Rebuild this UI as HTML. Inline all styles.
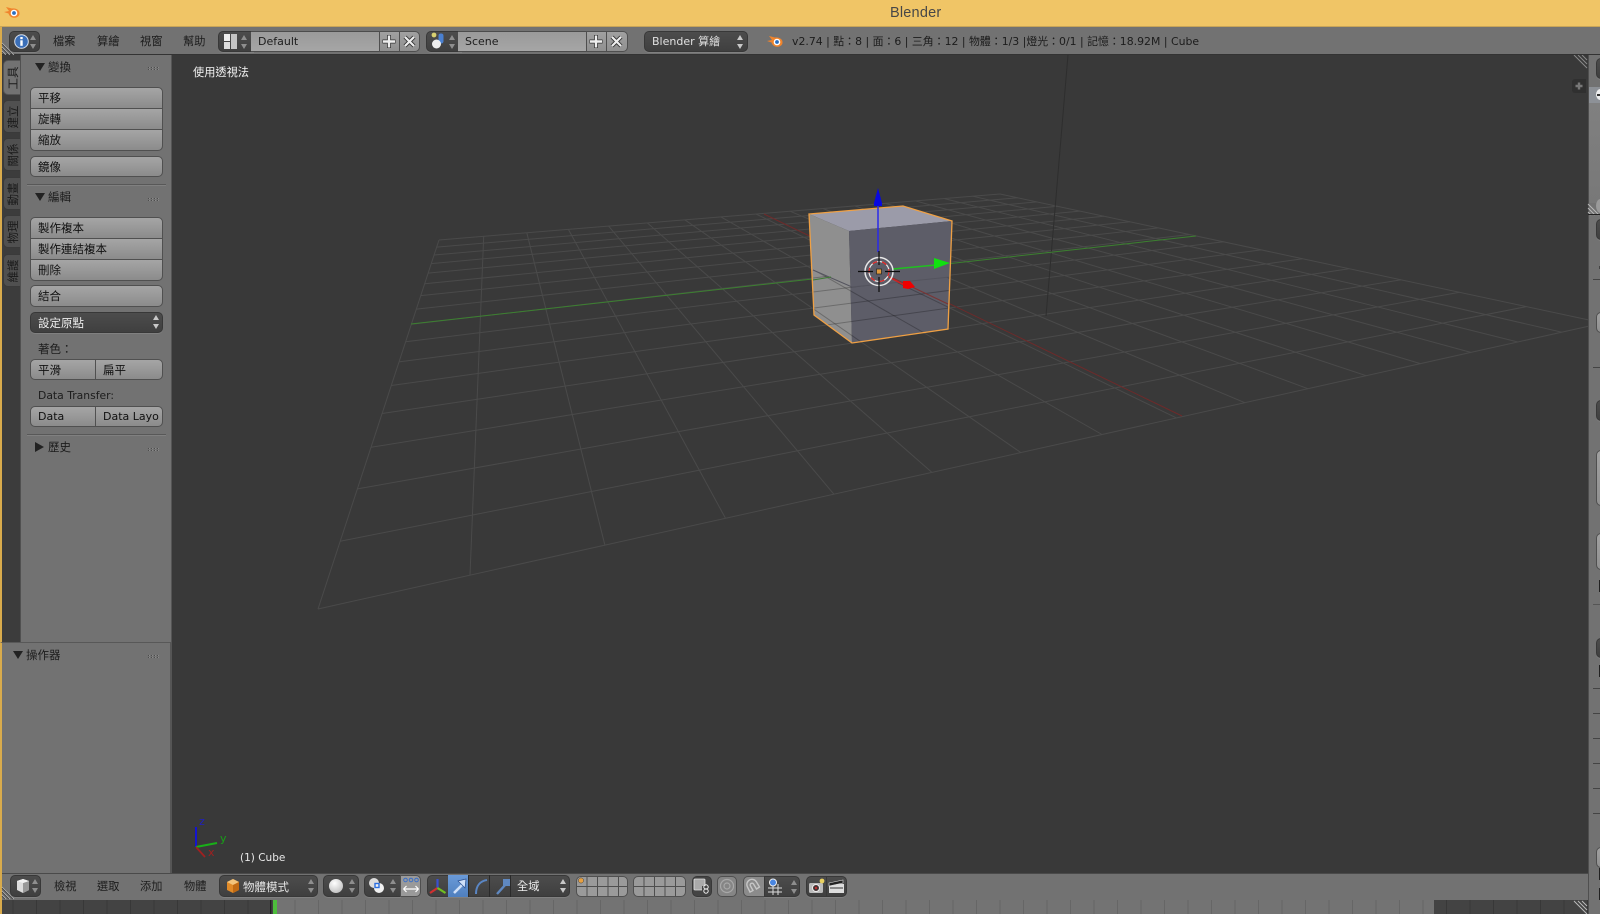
<!DOCTYPE html>
<html><head><meta charset="utf-8"><title>Blender</title>
<style>
html,body{margin:0;padding:0;width:1600px;height:914px;overflow:hidden;background:#393939}
body{position:relative;font:11px "DejaVu Sans","Noto Sans CJK TC",sans-serif;color:#1c1c1c;filter:blur(.3px)}
.a{position:absolute;white-space:nowrap}
.t{position:absolute;white-space:nowrap;line-height:16px;height:16px}
.hd{background:#727272}
.dk{position:absolute;box-sizing:border-box;background:linear-gradient(#4c4c4c,#3f3f3f);border:1px solid #383838;border-radius:5px;box-shadow:0 1px 0 #808080}
.fld{position:absolute;box-sizing:border-box;background:linear-gradient(#9a9a9a,#a6a6a6);border:1px solid #4c4c4c;border-left:0;border-right:0}
.btn{position:absolute;box-sizing:border-box;background:linear-gradient(#a5a5a5,#8b8b8b);border:1px solid #505050;line-height:20px;padding-left:7px;color:#111;font-size:11.5px}
.lt{position:absolute;box-sizing:border-box;background:linear-gradient(#a0a0a0,#909090);border:1px solid #4f4f4f;border-radius:5px}
.ud{position:absolute;width:7px;height:14px}
.ud:before,.ud:after{content:"";position:absolute;left:0;border-left:3.5px solid transparent;border-right:3.5px solid transparent}
.ud:before{top:0;border-bottom:5.5px solid #8e8e8e}
.ud:after{bottom:0;border-top:5.5px solid #8e8e8e}
.ud.w:before{border-bottom-color:#c8c8c8}.ud.w:after{border-top-color:#c8c8c8}
.tab{position:absolute;left:3px;width:18px;box-sizing:border-box;background:#505050;border-radius:5px 0 0 5px;border:1px solid #3a3a3a;border-right:0}
.tab span{position:absolute;left:50%;top:50%;transform:translate(-50%,-50%) rotate(-90deg);white-space:nowrap;font-size:11.5px;color:#1a1a1a;line-height:14px}
.grip{position:absolute;left:148px;width:11px;height:5px;background:repeating-linear-gradient(0deg,#727272 0 1px,transparent 1px 2px),repeating-linear-gradient(90deg,#4d4d4d 0 1px,#8a8a8a 1px 2px,transparent 2px 3px)}
.tri{position:absolute;width:0;height:0;border-left:5px solid transparent;border-right:5px solid transparent;border-top:8px solid #222}
.trr{position:absolute;width:0;height:0;border-top:5px solid transparent;border-bottom:5px solid transparent;border-left:9px solid #222}
.sep{position:absolute;left:27px;width:139px;height:1px;background:#585858;box-shadow:0 1px 0 #808080}
svg{position:absolute;overflow:visible}
</style></head><body>

<!-- viewport -->
<svg id="vp" style="left:0;top:0" width="1600" height="914" viewBox="0 0 1600 914">
<g id="g1" stroke="#4a4a4a" stroke-width="1" fill="none"></g>
<line x1="1068" y1="55" x2="1046" y2="316" stroke="#2e2e2e"/>
<line x1="764" y1="214" x2="1182" y2="416" stroke="#6e2a2a"/>
<line x1="411" y1="324" x2="1196" y2="236" stroke="#3c8030"/>
<polygon points="809,214 903,206 952,221 849,231" fill="#9b9ba9"/>
<polygon points="809,214 849,231 852,343 814,315" fill="#8f8f8f"/>
<polygon points="849,231 952,221 948,329 852,343" fill="#5d5d68"/>
<clipPath id="cl"><polygon points="813,270 852,287 950,277 948,329 852,343 814,315"/></clipPath>
<g id="g2" stroke="rgba(0,0,0,.25)" fill="none" clip-path="url(#cl)"></g>
<polyline points="813,270 852,287 950,277" stroke="#54545e" fill="none"/>
<line x1="813" y1="280" x2="831" y2="277" stroke="#3c7a32"/>
<line x1="893" y1="278" x2="948" y2="304" stroke="#7a3434"/>
<polygon points="809,214 903,206 952,221 948,329 852,343 814,315" fill="none" stroke="#efa044" stroke-width="1.300"/>
<!-- manipulator -->
<line x1="878" y1="200" x2="878" y2="252" stroke="#2a2ae8" stroke-width="1.500"/>
<polygon points="878,188 882,203 882,206 874,206 874,203" fill="#0808e0"/>
<line x1="893" y1="269" x2="936" y2="265" stroke="#20c020" stroke-width="1.500"/>
<polygon points="950,263 934,258 934,269" fill="#10e010"/>
<line x1="889" y1="277" x2="904" y2="285" stroke="#d02020" stroke-width="1.500"/>
<polygon points="903,281 910,281 915,287 908,289 903,288" fill="#f00000"/>
<!-- cursor -->
<circle cx="879" cy="271.500" r="14" fill="none" stroke="#e8e8e8" stroke-width="1.500"/>
<circle cx="879" cy="271.500" r="10" fill="none" stroke="#e8e8e8" stroke-width="1.200"/>
<circle cx="879" cy="271.500" r="10" fill="none" stroke="#e02020" stroke-width="1.200" stroke-dasharray="5 5"/>
<path d="M858 271.500h15M885 271.500h15M879 251v14M879 277v15" stroke="#0c0c0c" stroke-width="1.200"/>
<rect x="876.500" y="269" width="5" height="5" fill="#e09a3c" stroke="#222" stroke-width=".7"/>
<!-- axis widget -->
<path d="M196 847V827" stroke="#1414d0" stroke-width="2"/>
<path d="M196 847L217 843" stroke="#18b018" stroke-width="2"/>
<path d="M196 847L205 857" stroke="#a02020" stroke-width="1.800"/>
<text x="199" y="825" font-size="11" fill="#2020c0" font-family="DejaVu Sans">z</text>
<text x="220" y="842" font-size="11" fill="#18a018" font-family="DejaVu Sans">y</text>
<text x="208" y="856" font-size="11" fill="#a02020" font-family="DejaVu Sans">x</text>
<!-- corners -->
<path d="M1574 55l13 13M1578 55l9 9M1582 55l5 5" stroke="#8a8a8a" stroke-width="1"/>
</svg>
<div class="t" style="left:193px;top:65px;color:#f4f4f4;font-size:11.200px">使用透視法</div>
<div class="t" style="left:240px;top:850px;color:#e8e8e8;font-size:10.500px">(1) Cube</div>
<div class="a" style="left:1572px;top:79px;width:14px;height:14px;background:#303030;border-radius:3px 0 0 3px"></div>
<svg style="left:1572px;top:79px" width="14" height="14"><path d="M7 3.500v7M3.500 7h7" stroke="#777" stroke-width="2.400"/></svg>

<!-- title -->
<div class="a" style="left:0;top:0;width:1600px;height:27px;background:#f0c566;border-bottom:1px solid #c9a558;box-sizing:border-box"></div>
<div class="t" style="left:890px;top:4px;font:14.500px/18px 'Liberation Sans',sans-serif;color:#474747;height:18px;letter-spacing:.2px">Blender</div>
<svg style="left:3px;top:4px" width="18" height="16" viewBox="0 0 18 16"><path d="M1 8l5-1L3 3l6 1.500C13 4 17 6 16.500 10c-.5 3-4 4.500-7 3.500C7 12.800 6 11 5.500 9.500z" fill="#f0842c"/><circle cx="11" cy="9" r="3.300" fill="#fff"/><circle cx="11" cy="9" r="1.900" fill="#2c6fc0"/></svg>

<!-- left orange strip -->
<div class="a" style="left:0;top:27px;width:2px;height:887px;background:#d9ab4c"></div>

<!-- top header -->
<div class="a hd" style="left:2px;top:27px;width:1598px;height:27px;border-bottom:1px solid #333;box-sizing:content-box"></div>
<svg style="left:2px;top:43px" width="14" height="12"><path d="M0 1l11 11M0 5l7 7M0 9l3 3" stroke="#3c3c3c"/><path d="M0 0l12 12M0 4l8 8M0 8l4 4" stroke="#bdbdbd" stroke-width=".7"/></svg>
<div class="dk" style="left:9px;top:31px;width:31px;height:21px"></div>
<svg style="left:14px;top:34px" width="15" height="15"><circle cx="7.500" cy="7.500" r="6.800" fill="#3b6fb8" stroke="#d8e0ec" stroke-width="1"/><rect x="6.300" y="6.300" width="2.400" height="5.500" fill="#fff"/><rect x="6.300" y="3" width="2.400" height="2.200" fill="#fff"/></svg>
<div class="ud" style="left:30px;top:35px"></div>
<div class="t" style="left:53px;top:34px;font-size:11.200px">檔案</div>
<div class="t" style="left:97px;top:34px;font-size:11.200px">算繪</div>
<div class="t" style="left:140px;top:34px;font-size:11.200px">視窗</div>
<div class="t" style="left:183px;top:34px;font-size:11.200px">幫助</div>

<div class="dk" style="left:218px;top:31px;width:36px;height:21px;border-radius:5px 0 0 5px"></div>
<svg style="left:224px;top:34px" width="14" height="15"><rect x="0" y="0" width="6" height="7" fill="#eee"/><rect x="0" y="8" width="6" height="7" fill="#ddd"/><rect x="7" y="0" width="6" height="15" fill="#c4c4c4"/></svg>
<div class="ud" style="left:241px;top:35px"></div>
<div class="fld" style="left:251px;top:31px;width:128px;height:21px;padding-left:7px;line-height:20px">Default</div>
<div class="lt" style="left:379px;top:31px;width:21px;height:21px;border-radius:0"></div>
<div class="lt" style="left:399px;top:31px;width:21px;height:21px;border-radius:0 5px 5px 0"></div>
<svg style="left:379px;top:31px" width="41" height="21"><path d="M10 4v13M3.500 10.500h13" stroke="#333" stroke-width="4"/><path d="M10 4.500v12M4 10.500h12" stroke="#eee" stroke-width="2.400"/><path d="M26 6l9 9M35 6l-9 9" stroke="#333" stroke-width="4"/><path d="M26 6l9 9M35 6l-9 9" stroke="#eee" stroke-width="2.200"/></svg>

<div class="dk" style="left:426px;top:31px;width:36px;height:21px;border-radius:5px 0 0 5px"></div>
<svg style="left:431px;top:32px" width="16" height="18"><circle cx="3" cy="3" r="2.400" fill="#d8d070"/><rect x="7.500" y="1.500" width="5" height="10" rx="2.200" fill="#4a80d0"/><circle cx="5.500" cy="12" r="4.500" fill="#eee"/></svg>
<div class="ud" style="left:449px;top:35px"></div>
<div class="fld" style="left:458px;top:31px;width:128px;height:21px;padding-left:7px;line-height:20px">Scene</div>
<div class="lt" style="left:586px;top:31px;width:21px;height:21px;border-radius:0"></div>
<div class="lt" style="left:606px;top:31px;width:22px;height:21px;border-radius:0 5px 5px 0"></div>
<svg style="left:586px;top:31px" width="41" height="21"><path d="M10 4v13M3.500 10.500h13" stroke="#333" stroke-width="4"/><path d="M10 4.500v12M4 10.500h12" stroke="#eee" stroke-width="2.400"/><path d="M26 6l9 9M35 6l-9 9" stroke="#333" stroke-width="4"/><path d="M26 6l9 9M35 6l-9 9" stroke="#eee" stroke-width="2.200"/></svg>

<div class="dk" style="left:644px;top:31px;width:104px;height:21px"></div>
<div class="t" style="left:652px;top:34px;color:#e0e0e0;font-size:11px">Blender 算繪</div>
<div class="ud w" style="left:737px;top:35px"></div>

<svg style="left:766px;top:33px" width="18" height="16" viewBox="0 0 18 16"><path d="M1 8l5-1L3 3l6 1.500C13 4 17 6 16.500 10c-.5 3-4 4.500-7 3.500C7 12.800 6 11 5.500 9.500z" fill="#f0842c"/><circle cx="11" cy="9" r="3.300" fill="#fff"/><circle cx="11" cy="9" r="1.900" fill="#2c6fc0"/></svg>
<div class="t" style="left:792px;top:34px;font-size:10.900px;color:#1c1c1c">v2.74 | 點：8 | 面：6 | 三角：12 | 物體：1/3 |燈光：0/1 | 記憶：18.92M | Cube</div>

<!-- left tabs -->
<div class="a" style="left:2px;top:55px;width:19px;height:818px;background:#3c3c3c"></div>
<div class="tab" style="top:60px;height:35px;background:#727272;border-color:#555"><span>工具</span></div>
<div class="tab" style="top:100px;height:33px"><span>建立</span></div>
<div class="tab" style="top:138px;height:33px"><span>關係</span></div>
<div class="tab" style="top:177px;height:33px"><span>動畫</span></div>
<div class="tab" style="top:215px;height:33px"><span>物理</span></div>
<div class="tab" style="top:254px;height:33px"><span>維護</span></div>

<!-- tool shelf -->
<div class="a" style="left:21px;top:55px;width:150px;height:818px;background:#727272;border-right:1px solid #555;border-left:1px solid #505050;box-sizing:content-box;margin-left:-1px"></div>

<div class="tri" style="left:35px;top:63px"></div>
<div class="t" style="left:48px;top:59px;font-size:11.500px">變換</div>
<div class="grip" style="top:66px"></div>
<div class="btn" style="left:30px;top:87px;width:133px;height:22px;border-radius:5px 5px 0 0">平移</div>
<div class="btn" style="left:30px;top:108px;width:133px;height:22px">旋轉</div>
<div class="btn" style="left:30px;top:129px;width:133px;height:22px;border-radius:0 0 5px 5px">縮放</div>
<div class="btn" style="left:30px;top:156px;width:133px;height:21px;border-radius:5px">鏡像</div>
<div class="sep" style="top:184px"></div>

<div class="tri" style="left:35px;top:193px"></div>
<div class="t" style="left:48px;top:189px;font-size:11.500px">編輯</div>
<div class="grip" style="top:197px"></div>
<div class="btn" style="left:30px;top:217px;width:133px;height:22px;border-radius:5px 5px 0 0">製作複本</div>
<div class="btn" style="left:30px;top:238px;width:133px;height:22px">製作連結複本</div>
<div class="btn" style="left:30px;top:259px;width:133px;height:22px;border-radius:0 0 5px 5px">刪除</div>
<div class="btn" style="left:30px;top:285px;width:133px;height:22px;border-radius:5px">結合</div>
<div class="dk" style="left:30px;top:312px;width:133px;height:21px;color:#eee;padding-left:7px;line-height:20px;font-size:11.500px">設定原點</div>
<div class="ud w" style="left:153px;top:315px"></div>
<div class="t" style="left:38px;top:341px;font-size:11.500px">著色：</div>
<div class="btn" style="left:30px;top:359px;width:66px;height:21px;border-radius:5px 0 0 5px">平滑</div>
<div class="btn" style="left:95px;top:359px;width:68px;height:21px;border-radius:0 5px 5px 0">扁平</div>
<div class="t" style="left:38px;top:388px;font-size:10.800px">Data Transfer:</div>
<div class="btn" style="left:30px;top:406px;width:66px;height:21px;border-radius:5px 0 0 5px;font-size:11px">Data</div>
<div class="btn" style="left:95px;top:406px;width:68px;height:21px;border-radius:0 5px 5px 0;font-size:11px;overflow:hidden">Data Layo</div>
<div class="sep" style="top:434px"></div>
<div class="trr" style="left:35px;top:442px"></div>
<div class="t" style="left:48px;top:439px;font-size:11.500px">歷史</div>
<div class="grip" style="top:447px"></div>

<div class="a" style="left:0;top:642px;width:171px;height:231px;background:#727272;border-top:1px solid #585858;box-sizing:border-box;border-left:2px solid #d9ab4c;border-right:1px solid #555"></div>
<div class="tri" style="left:13px;top:651px"></div>
<div class="t" style="left:26px;top:647px;font-size:11.500px">操作器</div>
<div class="grip" style="top:654px"></div>

<!-- bottom header -->
<div class="a hd" style="left:2px;top:873px;width:1586px;height:26px;border-top:1px solid #4a4a4a;border-bottom:1px solid #333;box-sizing:content-box"></div>
<svg style="left:2px;top:887px" width="14" height="13"><path d="M0 1l11 11M0 5l7 7M0 9l3 3" stroke="#3c3c3c"/><path d="M0 0l12 12M0 4l8 8M0 8l4 4" stroke="#bdbdbd" stroke-width=".7"/></svg>
<div class="dk" style="left:10px;top:875px;width:31px;height:22px"></div>
<svg style="left:15px;top:878px" width="16" height="16"><path d="M2 3l6-2 6 2v9l-6 3-6-3z" fill="#ddd"/><path d="M8 5l6-2v9l-6 3z" fill="#999"/><path d="M2 3l6 2 6-2-6-2z" fill="#f2f2f2"/></svg>
<div class="ud" style="left:32px;top:879px"></div>
<div class="t" style="left:54px;top:879px;font-size:11.200px">檢視</div>
<div class="t" style="left:97px;top:879px;font-size:11.200px">選取</div>
<div class="t" style="left:140px;top:879px;font-size:11.200px">添加</div>
<div class="t" style="left:184px;top:879px;font-size:11.200px">物體</div>

<div class="dk" style="left:219px;top:875px;width:99px;height:22px"></div>
<svg style="left:225px;top:878px" width="16" height="16"><path d="M2 4l6-3 6 3v8l-6 3-6-3z" fill="#e08a28"/><path d="M2 4l6-3 6 3-6 3z" fill="#f2c47c"/><path d="M8 7l6-3v8l-6 3z" fill="#c06a14"/></svg>
<div class="t" style="left:243px;top:879px;color:#e6e6e6;font-size:11.500px">物體模式</div>
<div class="ud" style="left:308px;top:879px"></div>

<div class="dk" style="left:323px;top:875px;width:36px;height:22px"></div>
<svg style="left:329px;top:879px" width="15" height="15"><defs><radialGradient id="sp" cx=".4" cy=".3" r=".8"><stop offset="0" stop-color="#fff"/><stop offset="1" stop-color="#bbb"/></radialGradient></defs><circle cx="7" cy="7" r="7" fill="url(#sp)"/></svg>
<div class="ud" style="left:349px;top:879px"></div>

<div class="dk" style="left:364px;top:875px;width:37px;height:22px;border-radius:5px 0 0 5px"></div>
<svg style="left:368px;top:877px" width="18" height="18"><circle cx="6" cy="6" r="5" fill="#ddd"/><circle cx="11" cy="11" r="5" fill="#f0f0f0"/><rect x="7" y="6.500" width="4" height="4" fill="none" stroke="#2a6ee0" stroke-width="1.400"/></svg>
<div class="ud" style="left:390px;top:879px"></div>
<div class="lt" style="left:400px;top:875px;width:21px;height:22px;border-radius:0 5px 5px 0;background:#9a9a9a"></div>
<svg style="left:402px;top:877px" width="18" height="18"><circle cx="3.500" cy="3" r="1.800" fill="none" stroke="#3a6fc8"/><circle cx="9" cy="3" r="1.800" fill="none" stroke="#3a6fc8"/><circle cx="14.500" cy="3" r="1.800" fill="none" stroke="#3a6fc8"/><path d="M1.500 12h15M1.500 12l3-3M1.500 12l3 3M16.500 12l-3-3M16.500 12l-3 3" stroke="#fff" stroke-width="1.200" fill="none"/></svg>

<div class="dk" style="left:427px;top:875px;width:143px;height:22px"></div>
<div class="a" style="left:448px;top:875px;width:21px;height:22px;background:linear-gradient(#6a9ad8,#4f7fbe)"></div>
<div class="a" style="left:468px;top:875px;width:1px;height:22px;background:#2a2a2a"></div>
<div class="a" style="left:489px;top:875px;width:1px;height:22px;background:#2a2a2a"></div>
<div class="a" style="left:510px;top:875px;width:1px;height:22px;background:#2a2a2a"></div>
<svg style="left:427px;top:875px" width="90" height="22">
<path d="M10.500 13V4" stroke="#3a50d0" stroke-width="2.200"/><path d="M10.500 13L3 18" stroke="#d03030" stroke-width="2.200"/><path d="M10.500 13l8 5" stroke="#70c020" stroke-width="2.200"/>
<path d="M27 18L37 8" stroke="#cfe0f8" stroke-width="2.600"/><polygon points="39,4 31,6 38,13" fill="#cfe0f8" stroke="#2a4f90" stroke-width=".7"/>
<path d="M49 19c0-8 4-13 11-14" fill="none" stroke="#5a86c4" stroke-width="2"/>
<path d="M70 19L79 9" stroke="#5f88c0" stroke-width="2.400"/><rect x="76" y="4" width="7" height="7" fill="#5f88c0"/>
</svg>
<div class="t" style="left:517px;top:879px;color:#eee;font-size:11.200px">全域</div>
<div class="ud w" style="left:560px;top:879px"></div>

<div class="a" style="left:576px;top:876px;width:52px;height:21px;box-sizing:border-box;border:1px solid #505050;border-radius:5px;background:repeating-linear-gradient(90deg,#9a9a9a 0 9.500px,#4e4e4e 9.500px 10.500px);overflow:hidden"><div class="a" style="left:0;top:9px;width:52px;height:1px;background:#4e4e4e"></div></div>
<svg style="left:576px;top:876px" width="12" height="10"><circle cx="5" cy="4.500" r="2.600" fill="#e8a040" stroke="#444" stroke-width=".5"/></svg>
<div class="a" style="left:633px;top:876px;width:53px;height:21px;box-sizing:border-box;border:1px solid #505050;border-radius:5px;background:repeating-linear-gradient(90deg,#9a9a9a 0 9.500px,#4e4e4e 9.500px 10.500px);overflow:hidden"><div class="a" style="left:0;top:9px;width:53px;height:1px;background:#4e4e4e"></div></div>

<div class="dk" style="left:692px;top:876px;width:20px;height:21px;background:#444"></div>
<svg style="left:694px;top:878px" width="17" height="17"><rect x="0" y="1" width="11" height="11" rx="1" fill="#aaa" stroke="#e0e0e0" stroke-width=".8"/><path d="M8 8h6v7H8z" fill="#444"/><circle cx="12" cy="9" r="2.200" fill="none" stroke="#eee"/><circle cx="12" cy="13" r="2.200" fill="none" stroke="#eee"/></svg>
<div class="lt" style="left:717px;top:876px;width:20px;height:21px;background:#858585"></div>
<svg style="left:719px;top:878px" width="16" height="16"><circle cx="8" cy="8" r="6.500" fill="none" stroke="#a8a8a8" stroke-width="1.200"/><circle cx="8" cy="8" r="3" fill="none" stroke="#a8a8a8" stroke-width="1.200"/></svg>
<div class="lt" style="left:743px;top:876px;width:22px;height:21px;border-radius:5px 0 0 5px;background:#8b8b8b"></div>
<svg style="left:745px;top:878px" width="18" height="17"><path d="M5 14L2.500 9a5 5 0 0 1 9-5l3 5-3 2-3-5a1.500 1.500 0 0 0-3 2l2.500 4.500z" fill="none" stroke="#c6c6c6" stroke-width="1.400"/></svg>
<div class="dk" style="left:764px;top:876px;width:36px;height:21px;border-radius:0 5px 5px 0"></div>
<svg style="left:767px;top:878px" width="17" height="17"><path d="M1 10h14M1 14h14M6 6v11M11 6v11" stroke="#ddd" stroke-width="1"/><circle cx="6" cy="4.500" r="3.500" fill="#4a86e0" stroke="#eee"/></svg>
<div class="ud" style="left:791px;top:880px"></div>
<div class="dk" style="left:806px;top:876px;width:21px;height:21px;border-radius:5px 0 0 5px"></div>
<svg style="left:808px;top:878px" width="18" height="17"><rect x="1" y="5" width="14" height="10" rx="1.500" fill="#bbb"/><circle cx="8" cy="10" r="3.500" fill="#433" stroke="#eee"/><circle cx="8" cy="10" r="1.200" fill="#c03030"/><circle cx="14" cy="3" r="2.400" fill="#e8d060"/></svg>
<div class="dk" style="left:826px;top:876px;width:21px;height:21px;border-radius:0 5px 5px 0"></div>
<svg style="left:829px;top:879px" width="16" height="15"><rect x="0" y="5" width="15" height="9" fill="#ddd"/><path d="M1 9h13" stroke="#333"/><path d="M0 4l14-3v3L0 7z" fill="#222" stroke="#ddd" stroke-width=".6"/></svg>

<!-- timeline -->
<div class="a" style="left:2px;top:900px;width:1598px;height:14px;background:#434343"></div>
<div class="a" style="left:277px;top:900px;width:1157px;height:14px;background:#737373"></div>
<svg id="tl" style="left:0;top:900px" width="1600" height="14"></svg>
<div class="a" style="left:270px;top:900px;width:1px;height:14px;background:#202020"></div>
<div class="a" style="left:273px;top:900px;width:4px;height:14px;background:#4dbd3c"></div>
<svg style="left:1574px;top:900px" width="14" height="14"><path d="M0 1l13 13M4 1l9 9M8 1l5 5" stroke="#bbb" stroke-width="1"/></svg>

<!-- right strip -->
<div class="a" style="left:1588px;top:55px;width:12px;height:859px;background:#727272;border-left:1px solid #4f4f4f;box-sizing:border-box"></div>
<div class="dk" style="left:1596px;top:58px;width:10px;height:21px"></div>
<div class="a" style="left:1589px;top:87px;width:11px;height:16px;background:#8d9197"></div>
<div class="a" style="left:1596px;top:89px;width:9px;height:11px;border-radius:50%;background:#eee"></div>
<div class="a" style="left:1597px;top:94px;width:3px;height:1.500px;background:#333"></div>
<div class="a" style="left:1589px;top:103px;width:11px;height:100px;background:linear-gradient(#808080,#787878)"></div>
<div class="a" style="left:1596px;top:199px;width:9px;height:14px;border-radius:50%;background:#9a9a9a"></div>
<svg style="left:1588px;top:203px" width="12" height="12"><path d="M0 1l11 11M0 5l7 7M0 9l3 3" stroke="#b8b8b8"/></svg>
<div class="a" style="left:1588px;top:214px;width:12px;height:1px;background:#222"></div>
<div class="dk" style="left:1596px;top:219px;width:10px;height:21px"></div>
<div class="a" style="left:1599px;top:266px;width:2px;height:3px;background:#444"></div>
<div class="a" style="left:1593px;top:279px;width:7px;height:1px;background:#444"></div>
<div class="lt" style="left:1596px;top:312px;width:10px;height:21px"></div>
<div class="a" style="left:1593px;top:367px;width:7px;height:1px;background:#444"></div>
<div class="dk" style="left:1596px;top:400px;width:10px;height:21px"></div>
<div class="lt" style="left:1596px;top:450px;width:10px;height:56px"></div>
<div class="lt" style="left:1596px;top:533px;width:10px;height:37px"></div>
<div class="a" style="left:1599px;top:580px;width:1px;height:12px;background:#222"></div>
<div class="a" style="left:1593px;top:604px;width:7px;height:1px;background:#555"></div>
<div class="dk" style="left:1596px;top:638px;width:10px;height:20px"></div>
<div class="a" style="left:1599px;top:665px;width:1px;height:12px;background:#222"></div>
<div class="a" style="left:1593px;top:688px;width:7px;height:1px;background:#444"></div>
<div class="a" style="left:1593px;top:713px;width:7px;height:1px;background:#444"></div>
<div class="a" style="left:1593px;top:738px;width:7px;height:1px;background:#444"></div>
<div class="a" style="left:1593px;top:763px;width:7px;height:1px;background:#444"></div>
<div class="a" style="left:1593px;top:788px;width:7px;height:1px;background:#444"></div>
<div class="a" style="left:1593px;top:813px;width:7px;height:1px;background:#444"></div>
<div class="lt" style="left:1596px;top:847px;width:10px;height:21px"></div>
<div class="a" style="left:1599px;top:868px;width:1px;height:12px;background:#222"></div>
<div class="a" style="left:1599px;top:888px;width:1px;height:12px;background:#222"></div>

<script>
(function(){
var A=[439,240],C=[1000,194],D=[1603,323],B=[318,609];
var x0=A[0],y0=A[1],x1=C[0],y1=C[1],x2=D[0],y2=D[1],x3=B[0],y3=B[1];
var sx=x0-x1+x2-x3,sy=y0-y1+y2-y3,dx1=x1-x2,dx2=x3-x2,dy1=y1-y2,dy2=y3-y2;
var den=dx1*dy2-dx2*dy1,g=(sx*dy2-dx2*sy)/den,h=(dx1*sy-sx*dy1)/den;
var a=x1-x0+g*x1,b=x3-x0+h*x3,c=x0,d=y1-y0+g*y1,e=y3-y0+h*y3,f=y0;
function P(u,v){var w=g*u+h*v+1;return [((a*u+b*v+c)/w).toFixed(1),((d*u+e*v+f)/w).toFixed(1)];}
var s='';
for(var i=0;i<=16;i++){var t=i/16,p=P(t,0),q=P(t,1),m=P(0,t),n=P(1,t);
s+='<line x1="'+p[0]+'" y1="'+p[1]+'" x2="'+q[0]+'" y2="'+q[1]+'"/>';
s+='<line x1="'+m[0]+'" y1="'+m[1]+'" x2="'+n[0]+'" y2="'+n[1]+'"/>';}
document.getElementById('g1').innerHTML=s;
document.getElementById('g2').innerHTML=s;
var t='';
for(var x=13;x<1590;x+=23.5){var inside=x>277&&x<1434;
t+='<line x1="'+x.toFixed(1)+'" y1="0" x2="'+x.toFixed(1)+'" y2="14" stroke="'+(inside?'#666':'#383838')+'"/>';}
document.getElementById('tl').innerHTML=t;
})();
</script>
</body></html>
